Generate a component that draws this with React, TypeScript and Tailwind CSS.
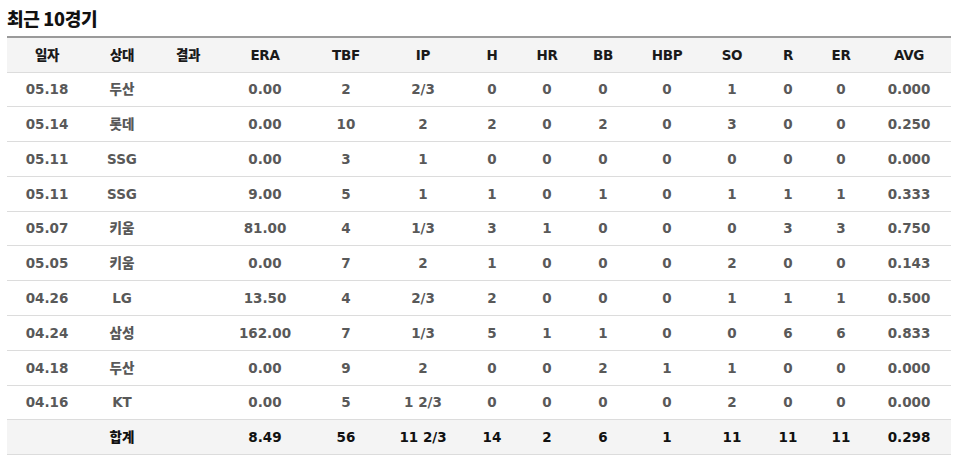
import React from "react";

const headers = ["일자", "상대", "결과", "ERA", "TBF", "IP", "H", "HR", "BB", "HBP", "SO", "R", "ER", "AVG"];
const widths = ["w-[80px]", "w-[70px]", "w-[62px]", "w-[92px]", "w-[70px]", "w-[84px]", "w-[54px]", "w-[56px]", "w-[56px]", "w-[72px]", "w-[58px]", "w-[54px]", "w-[52px]", "w-[84px]"];

const rows: string[][] = [
  ["05.18", "두산", "", "0.00", "2", "2/3", "0", "0", "0", "0", "1", "0", "0", "0.000"],
  ["05.14", "롯데", "", "0.00", "10", "2", "2", "0", "2", "0", "3", "0", "0", "0.250"],
  ["05.11", "SSG", "", "0.00", "3", "1", "0", "0", "0", "0", "0", "0", "0", "0.000"],
  ["05.11", "SSG", "", "9.00", "5", "1", "1", "0", "1", "0", "1", "1", "1", "0.333"],
  ["05.07", "키움", "", "81.00", "4", "1/3", "3", "1", "0", "0", "0", "3", "3", "0.750"],
  ["05.05", "키움", "", "0.00", "7", "2", "1", "0", "0", "0", "2", "0", "0", "0.143"],
  ["04.26", "LG", "", "13.50", "4", "2/3", "2", "0", "0", "0", "1", "1", "1", "0.500"],
  ["04.24", "삼성", "", "162.00", "7", "1/3", "5", "1", "1", "0", "0", "6", "6", "0.833"],
  ["04.18", "두산", "", "0.00", "9", "2", "0", "0", "2", "1", "1", "0", "0", "0.000"],
  ["04.16", "KT", "", "0.00", "5", "1 2/3", "0", "0", "0", "0", "2", "0", "0", "0.000"],
];

const total = ["8.49", "56", "11 2/3", "14", "2", "6", "1", "11", "11", "11", "0.298"];

export default function App() {
  return (
    <div
      className="w-[954px] h-[461px] bg-white px-[7px] pt-[5px]"
      style={{ fontFamily: "'DejaVu Sans', 'Noto Sans CJK KR', sans-serif" }}
    >
      <h2
        className="text-[18px] font-black text-[#111] leading-[26px] mb-[5px] tracking-[-0.3px]"
        style={{ fontFamily: "'Noto Sans CJK KR', sans-serif" }}
      >
        최근 10경기
      </h2>
      <table className="table-fixed border-collapse w-[943px] text-[13.5px] font-extrabold">
        <colgroup>
          {widths.map((w, i) => (
            <col key={i} className={w} />
          ))}
        </colgroup>
        <thead>
          <tr className="bg-[#f4f4f4] border-t-2 border-t-[#9a9a9a] border-b border-b-[#dcdcdc]">
            {headers.map((h) => (
              <th key={h} className="h-[35px] text-center text-[#1a1a1a] font-extrabold p-0 tracking-[-0.3px]">
                {h}
              </th>
            ))}
          </tr>
        </thead>
        <tbody>
          {rows.map((r, i) => (
            <tr key={i} className="border-b border-b-[#dcdcdc]">
              {r.map((c, j) => (
                <td key={j} className="h-[34.8px] text-center text-[#595959] p-0">
                  {c}
                </td>
              ))}
            </tr>
          ))}
          <tr className="bg-[#f4f4f4] border-b border-b-[#dcdcdc]">
            <td className="h-[34.8px] p-0"></td>
            <td className="h-[34.8px] text-center text-[#111] p-0">합계</td>
            <td className="h-[34.8px] p-0"></td>
            {total.map((c, j) => (
              <td key={j} className="h-[34.8px] text-center text-[#111] p-0">
                {c}
              </td>
            ))}
          </tr>
        </tbody>
      </table>
    </div>
  );
}
